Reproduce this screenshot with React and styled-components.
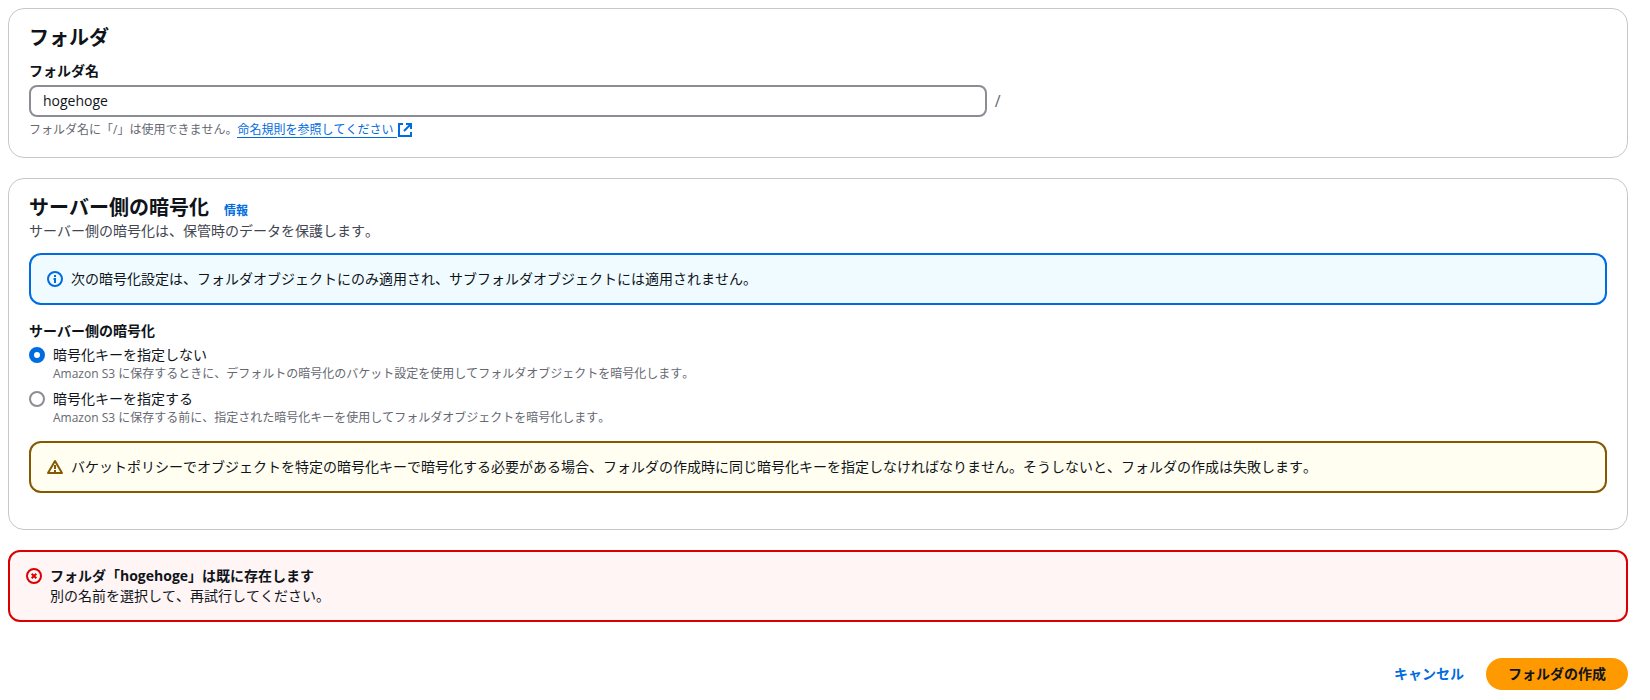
import React, { useState } from 'react';
import styled, { createGlobalStyle } from 'styled-components';

const GlobalStyle = createGlobalStyle`
  body {
    margin: 0;
    background: #fff;
    color: #0f141a;
    font-family: 'Open Sans', 'Noto Sans CJK JP', sans-serif;
    font-size: 14px;
    line-height: 20px;
    font-kerning: none;
    text-spacing-trim: space-all;
  }

  *, *::before, *::after {
    box-sizing: border-box;
  }
`;

const alertColors = {
  info: { border: '#006ce0', background: '#f0fbff' },
  warning: { border: '#855900', background: '#fffef0' },
  error: { border: '#db0000', background: '#fff5f5' },
};

const Page = styled.form`
  display: flex;
  flex-direction: column;
  gap: 20px;
  padding: 8px 22px 8px 8px;
`;

const Card = styled.section`
  padding: 17px 20px ${(props) => (props.$tall ? '36px' : '18px')};
  border: 1px solid #c6c6cd;
  border-radius: 16px;
`;

const CardHeader = styled.header`
  display: flex;
  align-items: baseline;
  gap: 15px;
`;

const Title = styled.h2`
  margin: 0;
  font-size: 20px;
  font-weight: 700;
  line-height: 24px;
`;

const InfoLink = styled.a`
  color: #006ce0;
  font-size: 12px;
  font-weight: 700;
  line-height: 16px;
  text-decoration: none;
`;

const Description = styled.p`
  margin: 1px 0 12px;
  color: #424650;
`;

const Field = styled.div`
  display: flex;
  flex-direction: column;
  gap: 4px;
  margin-top: 11px;
`;

const Label = styled.label`
  font-weight: 700;
`;

const InputRow = styled.div`
  display: flex;
  align-items: center;
  gap: 8px;
`;

const Suffix = styled.span`
  color: #656871;
  font-size: 16px;
`;

const TextInput = styled.input`
  width: calc(60% + 11px);
  height: 32px;
  padding: 3px 12px 5px;
  border: 2px solid #8c8c94;
  border-radius: 8px;
  background: #fff;
  color: #0f141a;
  font: inherit;
`;

const Hint = styled.span`
  color: #656871;
  font-size: 12px;
  line-height: 18px;
`;

const HintLink = styled.a`
  display: inline-flex;
  align-items: center;
  color: #006ce0;
  text-decoration: none;
`;

const LinkText = styled.span`
  height: 17px;
  padding-right: 4px;
  border-bottom: 1px solid #006ce0;
`;

const Icon = styled.svg`
  flex: none;
  width: 16px;
  height: 16px;
  fill: none;
  stroke: currentColor;
  stroke-width: 2;
`;

const AlertBox = styled.div`
  display: flex;
  gap: 8px;
  padding: 14px 16px;
  border: 2px solid ${(props) => alertColors[props.$type].border};
  border-radius: 12px;
  background: ${(props) => alertColors[props.$type].background};

  ${Icon} {
    margin-top: 2px;
    color: ${(props) => alertColors[props.$type].border};
  }
`;

const AlertTitle = styled.div`
  font-weight: 700;
`;

const RadioGroup = styled.fieldset`
  display: flex;
  flex-direction: column;
  gap: 6px;
  margin: 16px 0 14px;
  padding: 0;
  border: 0;
`;

const Legend = styled.legend`
  margin-bottom: 4px;
  padding: 0;
  font-weight: 700;
`;

const RadioLabel = styled.label`
  display: grid;
  grid-template-columns: 16px 1fr;
  column-gap: 8px;
  align-items: center;
`;

const RadioInput = styled.input`
  appearance: none;
  width: 16px;
  height: 16px;
  margin: 0;
  border: 2px solid #8c8c94;
  border-radius: 50%;
  background: #fff;

  &:checked {
    border: 5px solid #006ce0;
  }
`;

const RadioHint = styled(Hint)`
  grid-column: 2;
`;

const Actions = styled.div`
  display: flex;
  justify-content: flex-end;
  gap: 8px;
  margin-top: 16px;
`;

const Button = styled.button`
  height: 32px;
  padding: 4px ${(props) => (props.$primary ? '22px' : '14px')};
  border: 0;
  border-radius: 16px;
  background: ${(props) => (props.$primary ? '#ff9900' : 'transparent')};
  color: ${(props) => (props.$primary ? '#0f141a' : '#006ce0')};
  font: inherit;
  font-weight: 700;
  cursor: pointer;
`;

const ExternalIcon = () => (
  <Icon viewBox="0 0 16 16" aria-hidden="true">
    <path d="M6 2H2v12h12v-4M9 2h5v5M14 2 7 9" />
  </Icon>
);

const alertIcons = {
  info: (
    <>
      <circle cx="8" cy="8" r="7" />
      <path d="M8 12V8H6.5M8 4v2" />
    </>
  ),
  warning: (
    <>
      <path d="M8 2 1 14h14L8 2Z" strokeLinejoin="round" />
      <path d="M8 6v4M8 11v2" />
    </>
  ),
  error: (
    <>
      <circle cx="8" cy="8" r="7" />
      <path d="m5.7 5.7 4.6 4.6M10.3 5.7l-4.6 4.6" />
    </>
  ),
};

const Alert = ({ type, title, children }) => (
  <AlertBox $type={type} role={type === 'error' ? 'alert' : 'note'}>
    <Icon viewBox="0 0 16 16" aria-hidden="true">{alertIcons[type]}</Icon>
    <div>
      {title && <AlertTitle>{title}</AlertTitle>}
      <div>{children}</div>
    </div>
  </AlertBox>
);

const encryptionOptions = [
  {
    value: 'none',
    label: '暗号化キーを指定しない',
    hint: 'Amazon S3 に保存するときに、デフォルトの暗号化のバケット設定を使用してフォルダオブジェクトを暗号化します。',
  },
  {
    value: 'key',
    label: '暗号化キーを指定する',
    hint: 'Amazon S3 に保存する前に、指定された暗号化キーを使用してフォルダオブジェクトを暗号化します。',
  },
];

const App = () => {
  const [folderName, setFolderName] = useState('hogehoge');
  const [encryption, setEncryption] = useState('none');

  return (
    <>
      <GlobalStyle />
      <Page lang="ja" onSubmit={(e) => e.preventDefault()}>
        <Card>
          <CardHeader>
            <Title>フォルダ</Title>
          </CardHeader>
          <Field>
            <Label htmlFor="folder-name">フォルダ名</Label>
            <InputRow>
              <TextInput
                id="folder-name"
                type="text"
                value={folderName}
                onChange={(e) => setFolderName(e.target.value)}
              />
              <Suffix>/</Suffix>
            </InputRow>
            <Hint>
              フォルダ名に「/」は使用できません。
              <HintLink href="#naming">
                <LinkText>命名規則を参照してください</LinkText>
                <ExternalIcon />
              </HintLink>
            </Hint>
          </Field>
        </Card>

        <Card $tall>
          <CardHeader>
            <Title>サーバー側の暗号化</Title>
            <InfoLink href="#info">情報</InfoLink>
          </CardHeader>
          <Description>サーバー側の暗号化は、保管時のデータを保護します。</Description>
          <Alert type="info">
            次の暗号化設定は、フォルダオブジェクトにのみ適用され、サブフォルダオブジェクトには適用されません。
          </Alert>
          <RadioGroup>
            <Legend>サーバー側の暗号化</Legend>
            {encryptionOptions.map((option) => (
              <RadioLabel key={option.value}>
                <RadioInput
                  type="radio"
                  name="encryption"
                  value={option.value}
                  checked={encryption === option.value}
                  onChange={() => setEncryption(option.value)}
                />
                <span>{option.label}</span>
                <RadioHint>{option.hint}</RadioHint>
              </RadioLabel>
            ))}
          </RadioGroup>
          <Alert type="warning">
            バケットポリシーでオブジェクトを特定の暗号化キーで暗号化する必要がある場合、フォルダの作成時に同じ暗号化キーを指定しなければなりません。そうしないと、フォルダの作成は失敗します。
          </Alert>
        </Card>

        <Alert type="error" title="フォルダ「hogehoge」は既に存在します">
          別の名前を選択して、再試行してください。
        </Alert>

        <Actions>
          <Button type="button">キャンセル</Button>
          <Button type="submit" $primary>フォルダの作成</Button>
        </Actions>
      </Page>
    </>
  );
};

export default App;
